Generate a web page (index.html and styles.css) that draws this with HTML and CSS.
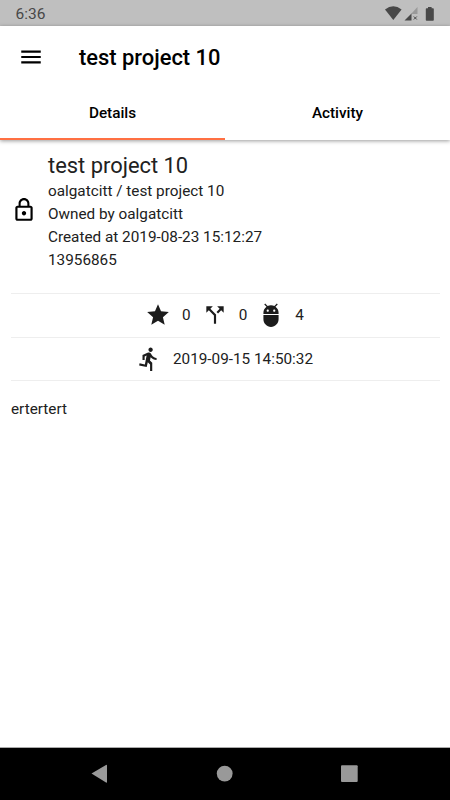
FILE: index.html
```html
<!DOCTYPE html>
<html lang="en">
<head>
  <meta charset="UTF-8" />
  <meta name="viewport" content="width=device-width, initial-scale=1.0" />
  <title>test project 10</title>
  <link rel="stylesheet" href="styles.css">
</head>
<body>
  <div class="status-bar">
    <span class="clock">6:36</span>
    <svg class="status-icons" width="50" height="16" viewBox="0 0 50 16">
      <path d="M0 3.500Q8.300-2.800 16.600 3.500L8.300 14z" />
      <path class="faded" d="M32.500 1v7h-6.500z" />
      <path d="M19.500 14.500l7-7v7z" />
      <path class="cross" d="M28.800 10.500l3 3M31.800 10.500l-3 3" />
      <path d="M43 1h3.600v1.200h1.400q.8 0 .8.800v11q0 .8-.8.800h-6.400q-.8 0-.8-.8V3q0-.8.8-.8H43z" />
    </svg>
  </div>

  <header>
    <div class="toolbar">
      <svg class="icon" viewBox="0 0 24 24"><path d="M3 18h18v-2H3v2zm0-5h18v-2H3v2zm0-7v2h18V6H3z" /></svg>
      <h1>test project 10</h1>
    </div>
    <nav>
      <a class="active">Details</a>
      <a>Activity</a>
    </nav>
  </header>

  <main>
    <section class="project">
      <svg class="icon" viewBox="0 0 24 24"><path d="M12 17c1.100 0 2-.9 2-2s-.9-2-2-2-2 .9-2 2 .9 2 2 2zm6-9h-1V6c0-2.760-2.240-5-5-5S7 3.240 7 6v2H6c-1.100 0-2 .9-2 2v10c0 1.100.9 2 2 2h12c1.100 0 2-.9 2-2V10c0-1.100-.9-2-2-2zM8.900 6c0-1.710 1.390-3.100 3.100-3.100s3.100 1.390 3.100 3.100v2H8.900V6zM18 20H6V10h12v10z" /></svg>
      <div class="info">
        <h2>test project 10</h2>
        <p>oalgatcitt / test project 10</p>
        <p>Owned by oalgatcitt</p>
        <p>Created at 2019-08-23 15:12:27</p>
        <p>13956865</p>
      </div>
    </section>

    <section class="row">
      <svg class="icon" viewBox="0 0 24 24"><path d="M12 17.270L18.180 21l-1.640-7.030L22 9.240l-7.190-.61L12 2 9.190 8.630 2 9.240l5.460 4.730L5.820 21z" /></svg>
      <span>0</span>
      <svg class="icon" viewBox="0 0 24 24"><path d="M14 4l2.290 2.290-2.880 2.880 1.420 1.420 2.880-2.880L20 10V4zm-4 0H4v6l2.290-2.290 4.710 4.700V20h2v-8.410l-5.290-5.300z" /></svg>
      <span>0</span>
      <svg class="icon" viewBox="0 0 24 24"><path d="M5 16c0 3.870 3.130 7 7 7s7-3.130 7-7v-4H5v4zM16.120 4.370l2.100-2.100-.82-.83-2.300 2.310C14.160 3.280 13.120 3 12 3s-2.160.28-3.090.75L6.600 1.440l-.82.83 2.100 2.100C6.140 5.640 5 7.680 5 10v1h14v-1c0-2.320-1.140-4.360-2.880-5.630zM9 9c-.55 0-1-.45-1-1s.45-1 1-1 1 .45 1 1-.45 1-1 1zm6 0c-.55 0-1-.45-1-1s.45-1 1-1 1 .45 1 1-.45 1-1 1z" /></svg>
      <span>4</span>
    </section>

    <section class="row">
      <svg class="icon" viewBox="0 0 24 24"><path d="M13.490 5.480c1.100 0 2-.9 2-2s-.9-2-2-2-2 .9-2 2 .9 2 2 2zm-3.600 13.900l1-4.400 2.100 2v6h2v-7.500l-2.100-2 .6-3c1.300 1.500 3.300 2.500 5.500 2.500v-2c-1.900 0-3.500-1-4.300-2.400l-1-1.600c-.4-.6-1-1-1.700-1-.3 0-.5.1-.8.1l-5.200 2.200v4.700h2v-3.400l1.800-.7-1.600 8.100-4.900-1-.4 2 7 1.400z" /></svg>
      <span>2019-09-15 14:50:32</span>
    </section>

    <p class="description">ertertert</p>
  </main>

  <footer>
    <svg width="450" height="52" viewBox="0 0 450 52">
      <path d="M91.500 25.500L106 17q1-.5 1 .5v16.500q0 1-1 .5z" />
      <circle cx="224.700" cy="25.600" r="7.900" />
      <rect x="341" y="17.200" width="16.700" height="16.700" rx="1" />
    </svg>
  </footer>
</body>
</html>
```
FILE: styles.css
```css
* {
  box-sizing: border-box;
}

body {
  font-family: Roboto, sans-serif;
  font-size: 15.300px;
  margin: 0;
  height: 800px;
  display: flex;
  flex-direction: column;
  background: #fff;
  color: #212121;
  overflow: hidden;
}

h1, h2, p {
  margin: 0;
}

.status-bar {
  height: 26px;
  padding: 1px 15px 0 15.500px;
  display: flex;
  justify-content: space-between;
  align-items: center;
  background: #bfbfbf;
  color: #484848;
}

.clock {
  font-size: 15.500px;
}

.status-icons {
  fill: #484848;
}

.status-icons .faded {
  fill: #999;
}

.status-icons .cross {
  stroke: #484848;
}

.icon {
  width: 26px;
  height: 26px;
  flex: none;
  fill: #1c1c1c;
}

header {
  height: 114px;
  box-shadow: 0 1px 4px rgba(0, 0, 0, 0.4);
  color: #000;
}

.toolbar {
  height: 61px;
  padding: 1px 18px 0;
  display: flex;
  align-items: center;
  gap: 35px;
}

.toolbar .icon {
  fill: #000;
}

.toolbar h1 {
  font-size: 21.900px;
  font-weight: 500;
}

nav {
  display: flex;
}

nav a {
  flex: 1;
  height: 53px;
  line-height: 52px;
  text-align: center;
  font-weight: 500;
  border-bottom: 2px solid transparent;
}

nav .active {
  border-color: #ff7043;
}

main {
  flex: 1;
  padding: 11px 10px 0 11px;
}

.project {
  display: flex;
  align-items: center;
  gap: 11px;
  height: 142px;
  padding-bottom: 21px;
}

.project .icon {
  margin-bottom: 4px;
  fill: #000;
}

.info h2 {
  font-size: 21.900px;
  font-weight: 400;
  line-height: 27px;
  margin-bottom: 1px;
}

.info p {
  line-height: 23px;
}

.row {
  height: 43.500px;
  padding-right: 2px;
  border-top: 1px solid #eee;
  display: flex;
  justify-content: center;
  align-items: center;
  gap: 11px;
}

.description {
  border-top: 1px solid #eee;
  padding-top: 19px;
}

footer {
  height: 53px;
  background: #000;
  border-top: 1px solid #aaa;
  fill: #999;
}
```
